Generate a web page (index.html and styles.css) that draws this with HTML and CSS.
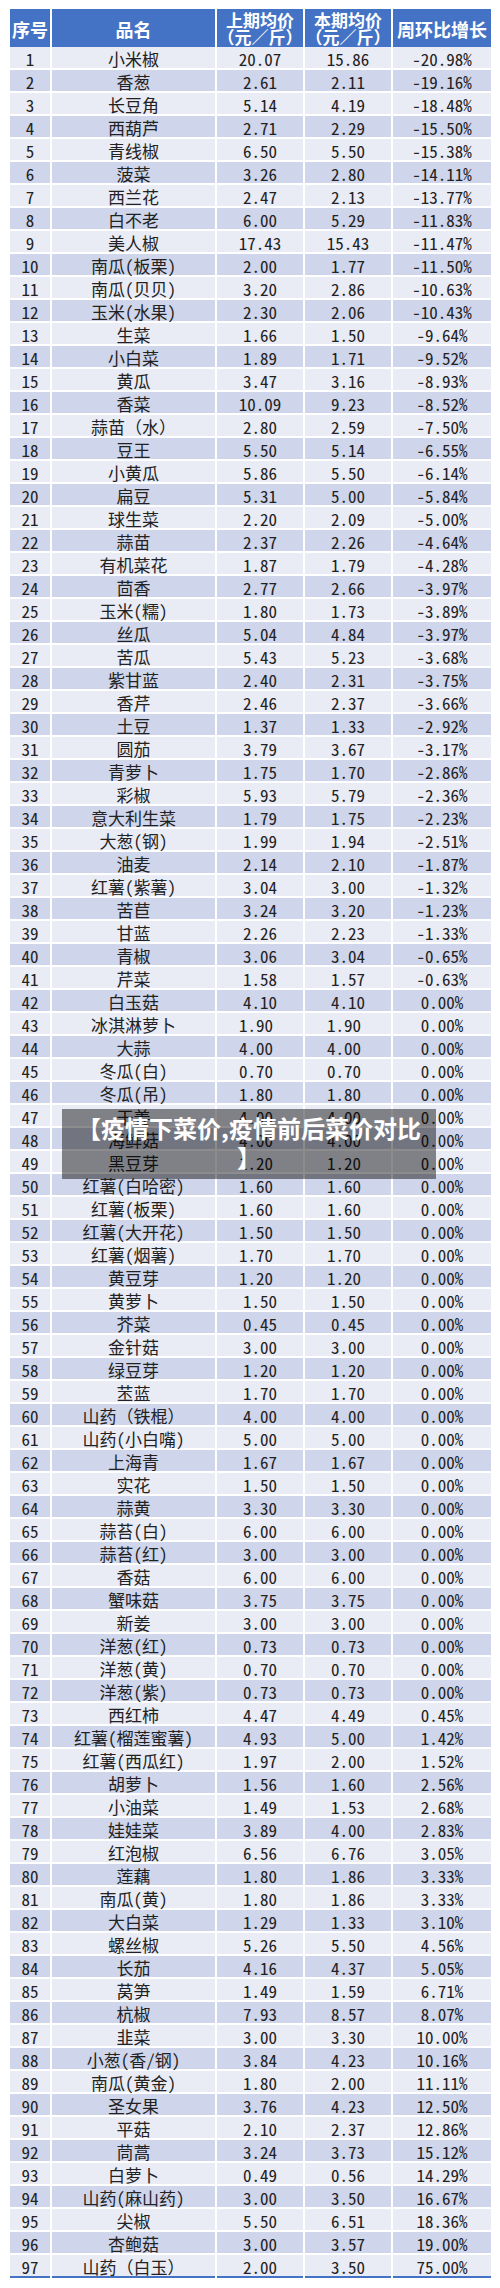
FILE: index.html
```html
<!DOCTYPE html>
<html lang="zh-CN">
<head>
<meta charset="utf-8">
<title>疫情下菜价,疫情前后菜价对比</title>
<link rel="stylesheet" href="styles.css">
</head>
<body>
<div class="page">
<div class="table">
<div class="row head"><div class="c">序号</div><div class="c">品名</div><div class="c two">上期均价<br>（元／斤）</div><div class="c two">本期均价<br>（元／斤）</div><div class="c">周环比增长</div></div>
<div class="row a"><div class="c n">1</div><div class="c">小米椒</div><div class="c n">20.07</div><div class="c n">15.86</div><div class="c n">-20.98%</div></div>
<div class="row b"><div class="c n">2</div><div class="c">香葱</div><div class="c n">2.61</div><div class="c n">2.11</div><div class="c n">-19.16%</div></div>
<div class="row a"><div class="c n">3</div><div class="c">长豆角</div><div class="c n">5.14</div><div class="c n">4.19</div><div class="c n">-18.48%</div></div>
<div class="row b"><div class="c n">4</div><div class="c">西葫芦</div><div class="c n">2.71</div><div class="c n">2.29</div><div class="c n">-15.50%</div></div>
<div class="row a"><div class="c n">5</div><div class="c">青线椒</div><div class="c n">6.50</div><div class="c n">5.50</div><div class="c n">-15.38%</div></div>
<div class="row b"><div class="c n">6</div><div class="c">菠菜</div><div class="c n">3.26</div><div class="c n">2.80</div><div class="c n">-14.11%</div></div>
<div class="row a"><div class="c n">7</div><div class="c">西兰花</div><div class="c n">2.47</div><div class="c n">2.13</div><div class="c n">-13.77%</div></div>
<div class="row b"><div class="c n">8</div><div class="c">白不老</div><div class="c n">6.00</div><div class="c n">5.29</div><div class="c n">-11.83%</div></div>
<div class="row a"><div class="c n">9</div><div class="c">美人椒</div><div class="c n">17.43</div><div class="c n">15.43</div><div class="c n">-11.47%</div></div>
<div class="row b"><div class="c n">10</div><div class="c">南瓜<span class="p">(</span>板栗<span class="p">)</span></div><div class="c n">2.00</div><div class="c n">1.77</div><div class="c n">-11.50%</div></div>
<div class="row a"><div class="c n">11</div><div class="c">南瓜<span class="p">(</span>贝贝<span class="p">)</span></div><div class="c n">3.20</div><div class="c n">2.86</div><div class="c n">-10.63%</div></div>
<div class="row b"><div class="c n">12</div><div class="c">玉米<span class="p">(</span>水果<span class="p">)</span></div><div class="c n">2.30</div><div class="c n">2.06</div><div class="c n">-10.43%</div></div>
<div class="row a"><div class="c n">13</div><div class="c">生菜</div><div class="c n">1.66</div><div class="c n">1.50</div><div class="c n">-9.64%</div></div>
<div class="row b"><div class="c n">14</div><div class="c">小白菜</div><div class="c n">1.89</div><div class="c n">1.71</div><div class="c n">-9.52%</div></div>
<div class="row a"><div class="c n">15</div><div class="c">黄瓜</div><div class="c n">3.47</div><div class="c n">3.16</div><div class="c n">-8.93%</div></div>
<div class="row b"><div class="c n">16</div><div class="c">香菜</div><div class="c n">10.09</div><div class="c n">9.23</div><div class="c n">-8.52%</div></div>
<div class="row a"><div class="c n">17</div><div class="c">蒜苗（水）</div><div class="c n">2.80</div><div class="c n">2.59</div><div class="c n">-7.50%</div></div>
<div class="row b"><div class="c n">18</div><div class="c">豆王</div><div class="c n">5.50</div><div class="c n">5.14</div><div class="c n">-6.55%</div></div>
<div class="row a"><div class="c n">19</div><div class="c">小黄瓜</div><div class="c n">5.86</div><div class="c n">5.50</div><div class="c n">-6.14%</div></div>
<div class="row b"><div class="c n">20</div><div class="c">扁豆</div><div class="c n">5.31</div><div class="c n">5.00</div><div class="c n">-5.84%</div></div>
<div class="row a"><div class="c n">21</div><div class="c">球生菜</div><div class="c n">2.20</div><div class="c n">2.09</div><div class="c n">-5.00%</div></div>
<div class="row b"><div class="c n">22</div><div class="c">蒜苗</div><div class="c n">2.37</div><div class="c n">2.26</div><div class="c n">-4.64%</div></div>
<div class="row a"><div class="c n">23</div><div class="c">有机菜花</div><div class="c n">1.87</div><div class="c n">1.79</div><div class="c n">-4.28%</div></div>
<div class="row b"><div class="c n">24</div><div class="c">茴香</div><div class="c n">2.77</div><div class="c n">2.66</div><div class="c n">-3.97%</div></div>
<div class="row a"><div class="c n">25</div><div class="c">玉米<span class="p">(</span>糯<span class="p">)</span></div><div class="c n">1.80</div><div class="c n">1.73</div><div class="c n">-3.89%</div></div>
<div class="row b"><div class="c n">26</div><div class="c">丝瓜</div><div class="c n">5.04</div><div class="c n">4.84</div><div class="c n">-3.97%</div></div>
<div class="row a"><div class="c n">27</div><div class="c">苦瓜</div><div class="c n">5.43</div><div class="c n">5.23</div><div class="c n">-3.68%</div></div>
<div class="row b"><div class="c n">28</div><div class="c">紫甘蓝</div><div class="c n">2.40</div><div class="c n">2.31</div><div class="c n">-3.75%</div></div>
<div class="row a"><div class="c n">29</div><div class="c">香芹</div><div class="c n">2.46</div><div class="c n">2.37</div><div class="c n">-3.66%</div></div>
<div class="row b"><div class="c n">30</div><div class="c">土豆</div><div class="c n">1.37</div><div class="c n">1.33</div><div class="c n">-2.92%</div></div>
<div class="row a"><div class="c n">31</div><div class="c">圆茄</div><div class="c n">3.79</div><div class="c n">3.67</div><div class="c n">-3.17%</div></div>
<div class="row b"><div class="c n">32</div><div class="c">青萝卜</div><div class="c n">1.75</div><div class="c n">1.70</div><div class="c n">-2.86%</div></div>
<div class="row a"><div class="c n">33</div><div class="c">彩椒</div><div class="c n">5.93</div><div class="c n">5.79</div><div class="c n">-2.36%</div></div>
<div class="row b"><div class="c n">34</div><div class="c">意大利生菜</div><div class="c n">1.79</div><div class="c n">1.75</div><div class="c n">-2.23%</div></div>
<div class="row a"><div class="c n">35</div><div class="c">大葱<span class="p">(</span>钢<span class="p">)</span></div><div class="c n">1.99</div><div class="c n">1.94</div><div class="c n">-2.51%</div></div>
<div class="row b"><div class="c n">36</div><div class="c">油麦</div><div class="c n">2.14</div><div class="c n">2.10</div><div class="c n">-1.87%</div></div>
<div class="row a"><div class="c n">37</div><div class="c">红薯<span class="p">(</span>紫薯<span class="p">)</span></div><div class="c n">3.04</div><div class="c n">3.00</div><div class="c n">-1.32%</div></div>
<div class="row b"><div class="c n">38</div><div class="c">苦苣</div><div class="c n">3.24</div><div class="c n">3.20</div><div class="c n">-1.23%</div></div>
<div class="row a"><div class="c n">39</div><div class="c">甘蓝</div><div class="c n">2.26</div><div class="c n">2.23</div><div class="c n">-1.33%</div></div>
<div class="row b"><div class="c n">40</div><div class="c">青椒</div><div class="c n">3.06</div><div class="c n">3.04</div><div class="c n">-0.65%</div></div>
<div class="row a"><div class="c n">41</div><div class="c">芹菜</div><div class="c n">1.58</div><div class="c n">1.57</div><div class="c n">-0.63%</div></div>
<div class="row b"><div class="c n">42</div><div class="c">白玉菇</div><div class="c n">4.10</div><div class="c n">4.10</div><div class="c n">0.00%</div></div>
<div class="row a s"><div class="c n">43</div><div class="c">冰淇淋萝卜</div><div class="c n">1.90</div><div class="c n">1.90</div><div class="c n">0.00%</div></div>
<div class="row b s"><div class="c n">44</div><div class="c">大蒜</div><div class="c n">4.00</div><div class="c n">4.00</div><div class="c n">0.00%</div></div>
<div class="row a s"><div class="c n">45</div><div class="c">冬瓜<span class="p">(</span>白<span class="p">)</span></div><div class="c n">0.70</div><div class="c n">0.70</div><div class="c n">0.00%</div></div>
<div class="row b s"><div class="c n">46</div><div class="c">冬瓜<span class="p">(</span>吊<span class="p">)</span></div><div class="c n">1.80</div><div class="c n">1.80</div><div class="c n">0.00%</div></div>
<div class="row a s"><div class="c n">47</div><div class="c">干姜</div><div class="c n">4.00</div><div class="c n">4.00</div><div class="c n">0.00%</div></div>
<div class="row b s"><div class="c n">48</div><div class="c">海鲜菇</div><div class="c n">4.00</div><div class="c n">4.00</div><div class="c n">0.00%</div></div>
<div class="row a s"><div class="c n">49</div><div class="c">黑豆芽</div><div class="c n">1.20</div><div class="c n">1.20</div><div class="c n">0.00%</div></div>
<div class="row b s"><div class="c n">50</div><div class="c">红薯<span class="p">(</span>白哈密<span class="p">)</span></div><div class="c n">1.60</div><div class="c n">1.60</div><div class="c n">0.00%</div></div>
<div class="row a s"><div class="c n">51</div><div class="c">红薯<span class="p">(</span>板栗<span class="p">)</span></div><div class="c n">1.60</div><div class="c n">1.60</div><div class="c n">0.00%</div></div>
<div class="row b s"><div class="c n">52</div><div class="c">红薯<span class="p">(</span>大开花<span class="p">)</span></div><div class="c n">1.50</div><div class="c n">1.50</div><div class="c n">0.00%</div></div>
<div class="row a s"><div class="c n">53</div><div class="c">红薯<span class="p">(</span>烟薯<span class="p">)</span></div><div class="c n">1.70</div><div class="c n">1.70</div><div class="c n">0.00%</div></div>
<div class="row b s"><div class="c n">54</div><div class="c">黄豆芽</div><div class="c n">1.20</div><div class="c n">1.20</div><div class="c n">0.00%</div></div>
<div class="row a"><div class="c n">55</div><div class="c">黄萝卜</div><div class="c n">1.50</div><div class="c n">1.50</div><div class="c n">0.00%</div></div>
<div class="row b"><div class="c n">56</div><div class="c">芥菜</div><div class="c n">0.45</div><div class="c n">0.45</div><div class="c n">0.00%</div></div>
<div class="row a"><div class="c n">57</div><div class="c">金针菇</div><div class="c n">3.00</div><div class="c n">3.00</div><div class="c n">0.00%</div></div>
<div class="row b"><div class="c n">58</div><div class="c">绿豆芽</div><div class="c n">1.20</div><div class="c n">1.20</div><div class="c n">0.00%</div></div>
<div class="row a"><div class="c n">59</div><div class="c">苤蓝</div><div class="c n">1.70</div><div class="c n">1.70</div><div class="c n">0.00%</div></div>
<div class="row b"><div class="c n">60</div><div class="c">山药（铁棍）</div><div class="c n">4.00</div><div class="c n">4.00</div><div class="c n">0.00%</div></div>
<div class="row a"><div class="c n">61</div><div class="c">山药<span class="p">(</span>小白嘴<span class="p">)</span></div><div class="c n">5.00</div><div class="c n">5.00</div><div class="c n">0.00%</div></div>
<div class="row b"><div class="c n">62</div><div class="c">上海青</div><div class="c n">1.67</div><div class="c n">1.67</div><div class="c n">0.00%</div></div>
<div class="row a"><div class="c n">63</div><div class="c">实花</div><div class="c n">1.50</div><div class="c n">1.50</div><div class="c n">0.00%</div></div>
<div class="row b"><div class="c n">64</div><div class="c">蒜黄</div><div class="c n">3.30</div><div class="c n">3.30</div><div class="c n">0.00%</div></div>
<div class="row a"><div class="c n">65</div><div class="c">蒜苔<span class="p">(</span>白<span class="p">)</span></div><div class="c n">6.00</div><div class="c n">6.00</div><div class="c n">0.00%</div></div>
<div class="row b"><div class="c n">66</div><div class="c">蒜苔<span class="p">(</span>红<span class="p">)</span></div><div class="c n">3.00</div><div class="c n">3.00</div><div class="c n">0.00%</div></div>
<div class="row a"><div class="c n">67</div><div class="c">香菇</div><div class="c n">6.00</div><div class="c n">6.00</div><div class="c n">0.00%</div></div>
<div class="row b"><div class="c n">68</div><div class="c">蟹味菇</div><div class="c n">3.75</div><div class="c n">3.75</div><div class="c n">0.00%</div></div>
<div class="row a"><div class="c n">69</div><div class="c">新姜</div><div class="c n">3.00</div><div class="c n">3.00</div><div class="c n">0.00%</div></div>
<div class="row b"><div class="c n">70</div><div class="c">洋葱<span class="p">(</span>红<span class="p">)</span></div><div class="c n">0.73</div><div class="c n">0.73</div><div class="c n">0.00%</div></div>
<div class="row a"><div class="c n">71</div><div class="c">洋葱<span class="p">(</span>黄<span class="p">)</span></div><div class="c n">0.70</div><div class="c n">0.70</div><div class="c n">0.00%</div></div>
<div class="row b"><div class="c n">72</div><div class="c">洋葱<span class="p">(</span>紫<span class="p">)</span></div><div class="c n">0.73</div><div class="c n">0.73</div><div class="c n">0.00%</div></div>
<div class="row a"><div class="c n">73</div><div class="c">西红柿</div><div class="c n">4.47</div><div class="c n">4.49</div><div class="c n">0.45%</div></div>
<div class="row b"><div class="c n">74</div><div class="c">红薯<span class="p">(</span>榴莲蜜薯<span class="p">)</span></div><div class="c n">4.93</div><div class="c n">5.00</div><div class="c n">1.42%</div></div>
<div class="row a"><div class="c n">75</div><div class="c">红薯<span class="p">(</span>西瓜红<span class="p">)</span></div><div class="c n">1.97</div><div class="c n">2.00</div><div class="c n">1.52%</div></div>
<div class="row b"><div class="c n">76</div><div class="c">胡萝卜</div><div class="c n">1.56</div><div class="c n">1.60</div><div class="c n">2.56%</div></div>
<div class="row a"><div class="c n">77</div><div class="c">小油菜</div><div class="c n">1.49</div><div class="c n">1.53</div><div class="c n">2.68%</div></div>
<div class="row b"><div class="c n">78</div><div class="c">娃娃菜</div><div class="c n">3.89</div><div class="c n">4.00</div><div class="c n">2.83%</div></div>
<div class="row a"><div class="c n">79</div><div class="c">红泡椒</div><div class="c n">6.56</div><div class="c n">6.76</div><div class="c n">3.05%</div></div>
<div class="row b"><div class="c n">80</div><div class="c">莲藕</div><div class="c n">1.80</div><div class="c n">1.86</div><div class="c n">3.33%</div></div>
<div class="row a"><div class="c n">81</div><div class="c">南瓜<span class="p">(</span>黄<span class="p">)</span></div><div class="c n">1.80</div><div class="c n">1.86</div><div class="c n">3.33%</div></div>
<div class="row b"><div class="c n">82</div><div class="c">大白菜</div><div class="c n">1.29</div><div class="c n">1.33</div><div class="c n">3.10%</div></div>
<div class="row a"><div class="c n">83</div><div class="c">螺丝椒</div><div class="c n">5.26</div><div class="c n">5.50</div><div class="c n">4.56%</div></div>
<div class="row b"><div class="c n">84</div><div class="c">长茄</div><div class="c n">4.16</div><div class="c n">4.37</div><div class="c n">5.05%</div></div>
<div class="row a"><div class="c n">85</div><div class="c">莴笋</div><div class="c n">1.49</div><div class="c n">1.59</div><div class="c n">6.71%</div></div>
<div class="row b"><div class="c n">86</div><div class="c">杭椒</div><div class="c n">7.93</div><div class="c n">8.57</div><div class="c n">8.07%</div></div>
<div class="row a"><div class="c n">87</div><div class="c">韭菜</div><div class="c n">3.00</div><div class="c n">3.30</div><div class="c n">10.00%</div></div>
<div class="row b"><div class="c n">88</div><div class="c">小葱<span class="p">(</span>香<span class="p">/</span>钢<span class="p">)</span></div><div class="c n">3.84</div><div class="c n">4.23</div><div class="c n">10.16%</div></div>
<div class="row a"><div class="c n">89</div><div class="c">南瓜<span class="p">(</span>黄金<span class="p">)</span></div><div class="c n">1.80</div><div class="c n">2.00</div><div class="c n">11.11%</div></div>
<div class="row b"><div class="c n">90</div><div class="c">圣女果</div><div class="c n">3.76</div><div class="c n">4.23</div><div class="c n">12.50%</div></div>
<div class="row a"><div class="c n">91</div><div class="c">平菇</div><div class="c n">2.10</div><div class="c n">2.37</div><div class="c n">12.86%</div></div>
<div class="row b"><div class="c n">92</div><div class="c">茼蒿</div><div class="c n">3.24</div><div class="c n">3.73</div><div class="c n">15.12%</div></div>
<div class="row a"><div class="c n">93</div><div class="c">白萝卜</div><div class="c n">0.49</div><div class="c n">0.56</div><div class="c n">14.29%</div></div>
<div class="row b"><div class="c n">94</div><div class="c">山药<span class="p">(</span>麻山药<span class="p">)</span></div><div class="c n">3.00</div><div class="c n">3.50</div><div class="c n">16.67%</div></div>
<div class="row a"><div class="c n">95</div><div class="c">尖椒</div><div class="c n">5.50</div><div class="c n">6.51</div><div class="c n">18.36%</div></div>
<div class="row b"><div class="c n">96</div><div class="c">杏鲍菇</div><div class="c n">3.00</div><div class="c n">3.57</div><div class="c n">19.00%</div></div>
<div class="row a last"><div class="c n">97</div><div class="c">山药（白玉）</div><div class="c n">2.00</div><div class="c n">3.50</div><div class="c n">75.00%</div></div>
</div>
<div class="caption">【疫情下菜价,疫情前后菜价对比<br>】</div>
</div>
</body>
</html>
```

FILE: styles.css
```css
html, body {
  margin: 0;
  padding: 0;
  background: #ffffff;
}

.page {
  position: relative;
  width: 500px;
  height: 2288px;
  padding: 9px 0 0 10px;
  box-sizing: border-box;
  font-family: "Noto Sans CJK SC", "Noto Sans", sans-serif;
  color: #222222;
  overflow: hidden;
}

.table {
  display: flex;
  flex-direction: column;
  width: 481px;
}

.row {
  display: grid;
  grid-template-columns: 40px 163px 86px 86px 98px;
  column-gap: 2px;
  height: 21px;
}

.row + .row {
  margin-top: 2px;
}

.head + .row {
  margin-top: 0;
}

.c {
  display: flex;
  align-items: center;
  justify-content: center;
  height: 21px;
  font-size: 17px;
  line-height: 19px;
  padding-top: 2px;
  box-sizing: border-box;
  white-space: nowrap;
}

.n {
  font-family: "Noto Sans Mono CJK SC", "Noto Sans CJK SC", "DejaVu Sans Mono", monospace;
  font-feature-settings: "hwid" 1;
}

.p {
  font-family: "Noto Sans Mono CJK SC", "Noto Sans CJK SC", monospace;
  font-feature-settings: "hwid" 1;
}

.a .c {
  background: #e9ebf5;
}

.b .c {
  background: #cfd5ea;
}

.s .c:nth-child(3),
.s .c:nth-child(4) {
  padding-right: 8px;
}

.head {
  height: 38px;
}

.head .c {
  height: 38px;
  background: #4472c4;
  color: #ffffff;
  font-weight: 700;
  font-size: 18px;
  line-height: 20px;
  padding-top: 2px;
  text-align: center;
}

.head .two {
  display: block;
  font-size: 17px;
  line-height: 17px;
  padding-top: 2px;
}

.last {
  height: 23px;
}

.last .c {
  height: 23px;
  border-bottom: 2px solid #4472c4;
}

.caption {
  position: absolute;
  left: 62px;
  top: 1109px;
  width: 374px;
  height: 70px;
  box-sizing: border-box;
  padding: 4px 12px 0;
  background: rgba(0, 0, 0, 0.45);
  color: #ffffff;
  font-weight: 700;
  font-size: 24px;
  line-height: 29px;
  text-align: center;
  white-space: nowrap;
}
```
